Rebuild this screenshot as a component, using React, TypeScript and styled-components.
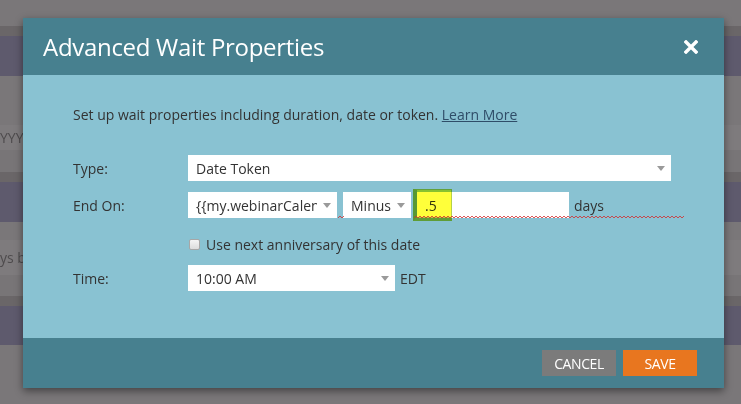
import React from 'react'
import styled, { createGlobalStyle } from 'styled-components'

const GlobalStyle = createGlobalStyle`
    html, body {
        margin: 0;
        padding: 0;
        width: 741px;
        height: 404px;
        overflow: hidden;
        font-family: 'Open Sans', 'Noto Sans', sans-serif;
    }
`

const StyledPage = styled.div`
    position: relative;
    width: 741px;
    height: 404px;
    overflow: hidden;
    background-color: #7a7779;
    display: flex;
    flex-direction: column;
`

const StyledBand = styled.div<{ $h: number; $bg: string }>`
    height: ${(p) => p.$h}px;
    background-color: ${(p) => p.$bg};
    flex-shrink: 0;
    display: flex;
    align-items: center;
    color: #4e4b4d;
    font-size: 14px;
    overflow: hidden;
    white-space: nowrap;
`

const StyledModal = styled.div`
    position: absolute;
    left: 23px;
    top: 18px;
    width: 701px;
    height: 370px;
    display: flex;
    flex-direction: column;
    box-shadow: 0 3px 8px rgba(0, 0, 0, 0.45);
`

const StyledHeader = styled.div`
    height: 57px;
    background-color: #47808f;
    display: flex;
    align-items: center;
    justify-content: space-between;
    padding: 0 26px 0 20px;
    flex-shrink: 0;
`

const StyledTitle = styled.h2`
    margin: 0;
    color: #ffffff;
    font-size: 24px;
    font-weight: 400;
    letter-spacing: -0.3px;
`

const StyledClose = styled.svg`
    width: 14px;
    height: 14px;
    display: block;
`

const StyledBody = styled.div`
    flex: 1;
    background-color: #89c2d2;
    padding: 31px 53px 0 50px;
    display: flex;
    flex-direction: column;
`

const StyledIntro = styled.p`
    margin: 0 0 31px 0;
    font-size: 14px;
    line-height: 18px;
    color: #333333;
`

const StyledLink = styled.a`
    color: #2f4d68;
    text-decoration: underline;
`

const StyledRow = styled.div<{ $top: number; $h: number }>`
    position: relative;
    display: flex;
    align-items: center;
    height: ${(p) => p.$h}px;
    margin-top: ${(p) => p.$top}px;
`

const StyledLabel = styled.div`
    width: 115px;
    flex-shrink: 0;
    font-size: 14px;
    color: #333333;
`

const StyledControls = styled.div`
    display: flex;
    align-items: center;
    gap: 6px;
    height: 100%;
    flex: 1;
`

const StyledSelect = styled.div<{ $w?: number }>`
    position: relative;
    height: 100%;
    width: ${(p) => (p.$w ? `${p.$w}px` : 'auto')};
    flex: ${(p) => (p.$w ? '0 0 auto' : '1')};
    background-color: #ffffff;
    display: flex;
    align-items: center;
    padding: 0 20px 0 8px;
    box-sizing: border-box;
    font-size: 14px;
    color: #333333;
    white-space: nowrap;
    overflow: hidden;
`

const StyledArrow = styled.span`
    position: absolute;
    right: 6px;
    top: 50%;
    margin-top: -2px;
    width: 0;
    height: 0;
    border-left: 4px solid transparent;
    border-right: 4px solid transparent;
    border-top: 5px solid #9a9a9a;
`

const StyledMask = styled.span`
    position: absolute;
    right: 0;
    top: 0;
    width: 20px;
    height: 100%;
    background-color: #ffffff;
`

const StyledInput = styled.div`
    position: relative;
    width: 152px;
    height: 100%;
    background-color: #ffffff;
    display: flex;
    align-items: center;
    padding-left: 8px;
    box-sizing: border-box;
    font-size: 14px;
    color: #333333;
`

const StyledHighlight = styled.span`
    position: absolute;
    left: -4px;
    top: -3px;
    width: 39px;
    height: 32px;
    box-sizing: border-box;
    background-color: #ffff3a;
    border: 1px solid #b6d247;
    border-left: 4px solid #a4c83e;
    border-bottom: 4px solid #b0cf43;
    mix-blend-mode: multiply;
`

const StyledUnit = styled.span`
    font-size: 14px;
    color: #333333;
    margin-left: -1px;
`

const StyledSquiggle = styled.svg<{ $left: number; $w: number }>`
    position: absolute;
    left: ${(p) => p.$left}px;
    top: 23px;
    width: ${(p) => p.$w}px;
    height: 4px;
    display: block;
`

const StyledCheckLine = styled.label`
    display: flex;
    align-items: center;
    gap: 6px;
    font-size: 14px;
    color: #333333;
`

const StyledCheckbox = styled.span`
    width: 11px;
    height: 11px;
    box-sizing: border-box;
    border: 1px solid #a7a7a7;
    border-radius: 2px;
    background: linear-gradient(#f4f4f4, #dcdcdc);
    margin-left: 1px;
`

const StyledFooter = styled.div`
    height: 50px;
    flex-shrink: 0;
    background-color: #47808f;
    display: flex;
    align-items: center;
    justify-content: flex-end;
    gap: 7px;
    padding-right: 27px;
`

const StyledButton = styled.button<{ $primary?: boolean }>`
    width: 74px;
    height: 26px;
    border: none;
    padding: 0;
    font-family: inherit;
    font-size: 14px;
    color: #ffffff;
    letter-spacing: -0.4px;
    background-color: ${(p) => (p.$primary ? '#e8761f' : '#7b7b7b')};
    cursor: pointer;
`

const bands: { h: number; bg: string; text?: string }[] = [
    { h: 26, bg: '#7a7779' },
    { h: 10, bg: '#6a6668' },
    { h: 40, bg: '#5e5a6d' },
    { h: 49, bg: '#7a7779' },
    { h: 25, bg: '#7e7b7d', text: 'YYY' },
    { h: 22, bg: '#787577' },
    { h: 10, bg: '#6a6668' },
    { h: 40, bg: '#5e5a6d' },
    { h: 18, bg: '#7a7779' },
    { h: 35, bg: '#7e7b7d', text: 'ys b' },
    { h: 21, bg: '#787577' },
    { h: 10, bg: '#6a6668' },
    { h: 39, bg: '#5e5a6d' },
    { h: 59, bg: '#7a7779' },
]

function zigzag(w: number) {
    let d = 'M0 3'
    for (let x = 2; x <= w; x += 2) {
        d += ` L${x} ${x % 4 === 0 ? 3 : 1}`
    }
    return d
}

function Squiggle({ left, width }: { left: number; width: number }) {
    return (
        <StyledSquiggle $left={left} $w={width} viewBox={`0 0 ${width} 4`}>
            <path d={zigzag(width)} fill='none' stroke='#d42b2b' strokeWidth='0.8' />
        </StyledSquiggle>
    )
}

export default function App() {
    return (
        <>
            <GlobalStyle />
            <StyledPage>
                {bands.map((b, i) => (
                    <StyledBand key={i} $h={b.h} $bg={b.bg}>
                        {b.text}
                    </StyledBand>
                ))}
                <StyledModal>
                    <StyledHeader>
                        <StyledTitle>Advanced Wait Properties</StyledTitle>
                        <StyledClose viewBox='0 0 14 14'>
                            <path d='M2 2 L12 12 M12 2 L2 12' stroke='#ffffff' strokeWidth='3.4' strokeLinecap='square' />
                        </StyledClose>
                    </StyledHeader>
                    <StyledBody>
                        <StyledIntro>
                            Set up wait properties including duration, date or token. <StyledLink href='#'>Learn More</StyledLink>
                        </StyledIntro>
                        <StyledRow $top={0} $h={26}>
                            <StyledLabel>Type:</StyledLabel>
                            <StyledControls>
                                <StyledSelect>
                                    Date Token
                                    <StyledArrow />
                                </StyledSelect>
                            </StyledControls>
                        </StyledRow>
                        <StyledRow $top={11} $h={26}>
                            <StyledLabel>End On:</StyledLabel>
                            <StyledControls>
                                <StyledSelect $w={149}>
                                    {'{{my.webinarCalendar}}'}
                                    <StyledMask />
                                    <StyledArrow />
                                </StyledSelect>
                                <StyledSelect $w={68}>
                                    Minus
                                    <StyledArrow />
                                </StyledSelect>
                                <StyledInput>
                                    .5
                                    <StyledHighlight />
                                </StyledInput>
                                <StyledUnit>days</StyledUnit>
                            </StyledControls>
                            <Squiggle left={265} width={6} />
                            <Squiggle left={341} width={270} />
                        </StyledRow>
                        <StyledRow $top={14} $h={24}>
                            <StyledLabel />
                            <StyledCheckLine>
                                <StyledCheckbox />
                                Use next anniversary of this date
                            </StyledCheckLine>
                        </StyledRow>
                        <StyledRow $top={9} $h={26}>
                            <StyledLabel>Time:</StyledLabel>
                            <StyledControls>
                                <StyledSelect $w={207}>
                                    10:00 AM
                                    <StyledArrow />
                                </StyledSelect>
                                <StyledUnit>EDT</StyledUnit>
                            </StyledControls>
                        </StyledRow>
                    </StyledBody>
                    <StyledFooter>
                        <StyledButton>CANCEL</StyledButton>
                        <StyledButton $primary>SAVE</StyledButton>
                    </StyledFooter>
                </StyledModal>
            </StyledPage>
        </>
    )
}
